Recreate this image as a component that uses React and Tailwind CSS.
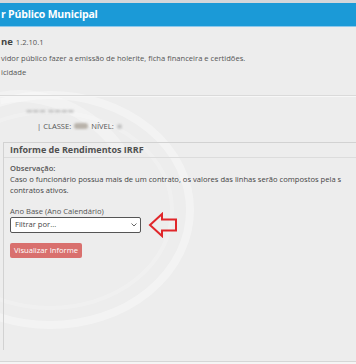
import React from 'react';

const font = { fontFamily: '"Open Sans", "DejaVu Sans", sans-serif' };

function Watermark() {
  // faint emblem swirl behind the content
  return (
    <svg className="absolute left-0 top-0 pointer-events-none" width="356" height="364" viewBox="0 0 356 364">
      <ellipse cx="50" cy="210" rx="140" ry="115" fill="none" stroke="#ffffff" strokeOpacity="0.35" strokeWidth="8" />
      <ellipse cx="50" cy="210" rx="122" ry="98" fill="none" stroke="#ffffff" strokeOpacity="0.2" strokeWidth="4" />
      <path d="M0 98 C40 90 90 108 120 150" fill="none" stroke="#ffffff" strokeOpacity="0.3" strokeWidth="12" />
    </svg>
  );
}

function RedArrow() {
  return (
    <svg width="30" height="26" viewBox="0 0 30 26" className="ml-[7px] -my-[5px]">
      <path d="M2 13 L14 2 L14 7.5 L28 7.5 L28 18.5 L14 18.5 L14 24 Z" fill="none" stroke="#e0262a" strokeWidth="2" />
    </svg>
  );
}

export default function App() {
  return (
    <div className="relative w-[356px] h-[364px] overflow-hidden bg-[#ededed] text-[#555]" style={font}>
      <Watermark />
      <div className="relative flex flex-col h-full">
        <div className="h-[3px] bg-[#d4d7da]" />
        <div className="h-[23px] bg-[#1b9ad7] flex items-center pl-[1px] text-white font-bold text-[10.5px] tracking-[-0.2px]">
          r Público Municipal
        </div>
        <div className="h-px bg-[#8cc8ec]" />

        <div className="pt-[9px] pl-[1px] flex items-baseline gap-[3px] leading-[12px]">
          <span className="font-bold text-[9.5px] text-[#444]">ne</span>
          <span className="text-[7.6px]">1.2.10.1</span>
        </div>
        <div className="mt-[4px] pl-[1px] text-[7.6px] leading-[12px]">
          vidor público fazer a emissão de holerite, ficha financeira e certidões.
        </div>
        <div className="mt-[2px] pl-[1px] text-[7.6px] leading-[12px]">icidade</div>

        <div className="mt-[17px] h-px bg-[#dadada]" />
        <div className="h-px bg-[#f7f7f7]" />

        <div className="mt-[9px] pl-[26px] text-[7px] leading-[10px] text-[#c4c4c4] blur-[1.2px]">
          ▬▬▬ ▬▬▬▬
        </div>
        <div className="mt-[4px] pl-[37px] flex items-center text-[7.6px] leading-[12px]">
          <span>| CLASSE:</span>
          <span className="mx-[3px] w-[14px] h-[6px] rounded-sm bg-[#b9b3ab] blur-[1px]" />
          <span>NÍVEL:</span>
          <span className="ml-[3px] w-[5px] h-[5px] rounded-sm bg-[#c4c4c4] blur-[1px]" />
        </div>

        <div className="mt-[10px] ml-[3px] flex-1 mb-[11px] border-l border-t border-[#d2d2d2] flex flex-col">
          <div className="h-[15px] border-b border-[#dcdcdc] pl-[6px] flex items-center font-bold text-[9px] text-[#505050]">
            Informe de Rendimentos IRRF
          </div>
          <div className="pl-[6px] pt-[5px]">
            <div className="text-[7.6px] leading-[11px] font-semibold">Observação:</div>
            <div className="text-[7.6px] leading-[11px] whitespace-nowrap text-[#444]">
              Caso o funcionário possua mais de um contrato, os valores das linhas serão compostos pela s
            </div>
            <div className="text-[7.6px] leading-[11px] text-[#444]">contratos ativos.</div>

            <div className="mt-[10px] text-[7.6px] leading-[11px]">Ano Base (Ano Calendário)</div>
            <div className="flex items-center">
              <div className="w-[131px] h-[16px] bg-white border border-[#555] rounded-[2px] flex items-center justify-between pl-[4px] pr-[3px]">
                <span className="text-[7.6px] text-[#444]">Filtrar por...</span>
                <svg width="6" height="4" viewBox="0 0 6 4">
                  <polyline points="0.5,0.5 3,3 5.5,0.5" fill="none" stroke="#666" strokeWidth="1" />
                </svg>
              </div>
              <RedArrow />
            </div>

            <button className="mt-[10px] h-[15px] px-[4px] rounded-[2px] bg-[#d9706e] text-white text-[7.6px] leading-[15px] block">
              Visualizar Informe
            </button>
          </div>
        </div>

        <div className="h-px bg-[#d6d6d6]" />
        <div className="h-[2px] bg-[#f5f5f5]" />
      </div>
    </div>
  );
}
